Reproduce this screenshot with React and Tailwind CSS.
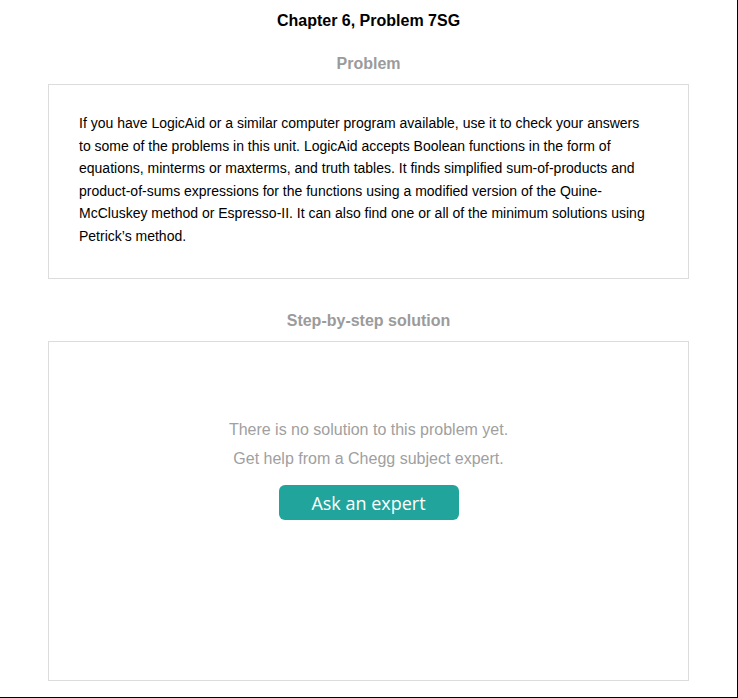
import React from 'react';

const problemText =
  "If you have LogicAid or a similar computer program available, use it to check your answers to some of the problems in this unit. LogicAid accepts Boolean functions in the form of equations, minterms or maxterms, and truth tables. It finds simplified sum-of-products and product-of-sums expressions for the functions using a modified version of the Quine-McCluskey method or Espresso-II. It can also find one or all of the minimum solutions using Petrick\u2019s method.";

const SectionTitle = ({ children, className }) => (
  <h2 className={`text-center text-[16px] font-bold leading-[18px] text-[#9b9b9b] ${className}`}>{children}</h2>
);

const App = () => {
  return (
    <div className="w-[738px] h-[698px] bg-white border-r border-b border-black font-['Liberation_Sans',Arial,sans-serif] text-black">
      <h1 className="pt-[12px] text-center text-[16px] font-bold leading-[18px]">Chapter 6, Problem 7SG</h1>

      <SectionTitle className="mt-[25px]">Problem</SectionTitle>
      <div className="ml-[48px] mt-[11px] w-[641px] h-[195px] border border-[#dcdcdc] pl-[30px] pr-[38px] pt-[27px]">
        <p className="text-[14px] leading-[22.6px]">{problemText}</p>
      </div>

      <SectionTitle className="mt-[33px]">Step-by-step solution</SectionTitle>
      <div className="ml-[48px] mt-[11px] w-[641px] h-[340px] border border-[#dcdcdc] flex flex-col items-center pt-[73px]">
        <p className="text-[16px] leading-[29px] text-[#a0a0a0]">There is no solution to this problem yet.</p>
        <p className="text-[16px] leading-[29px] text-[#a0a0a0]">Get help from a Chegg subject expert.</p>
        <button className="mt-[12px] w-[180px] h-[35px] rounded-[6px] bg-[#21a49b] text-white text-[18px] font-['Open_Sans',sans-serif] leading-none">
          Ask an expert
        </button>
      </div>
    </div>
  );
};

export default App;
